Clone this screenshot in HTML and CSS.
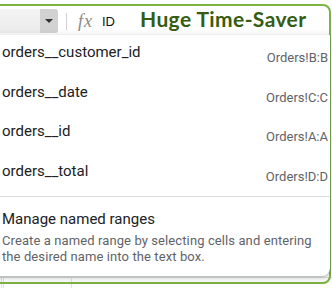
FILE: index.html
```html
<!DOCTYPE html>
<html lang="en">
<head>
  <meta charset="UTF-8">
  <meta name="viewport" content="width=device-width, initial-scale=1.0">
  <title>Named ranges</title>
  <link rel="stylesheet" href="styles.css">
</head>
<body>
  <div class="app">
    <div class="toolbar">
      <div class="name-box">
        <span class="name-value"></span>
        <span class="name-arrow"><span class="caret"></span></span>
      </div>
      <span class="divider"></span>
      <span class="fx">fx</span>
      <span class="formula">ID</span>
      <span class="caption">Huge Time-Saver</span>
    </div>

    <div class="sheet">
      <div class="grid-row">
        <span class="cell cell-narrow"></span>
        <span class="cell cell-wide"></span>
        <span class="cell"></span>
      </div>
    </div>

    <!-- green outline drawn over the shot -->
    <div class="frame"></div>

    <!-- named ranges dropdown -->
    <div class="menu">
      <ul class="range-list">
        <li class="range-item">
          <span class="range-name">orders__customer_id</span>
          <span class="range-ref">Orders!B:B</span>
        </li>
        <li class="range-item">
          <span class="range-name">orders__date</span>
          <span class="range-ref">Orders!C:C</span>
        </li>
        <li class="range-item">
          <span class="range-name">orders__id</span>
          <span class="range-ref">Orders!A:A</span>
        </li>
        <li class="range-item">
          <span class="range-name">orders__total</span>
          <span class="range-ref">Orders!D:D</span>
        </li>
      </ul>
      <div class="manage">
        <div class="manage-title">Manage named ranges</div>
        <p class="manage-text">Create a named range by selecting cells and entering the desired name into the text box.</p>
      </div>
    </div>
  </div>
</body>
</html>
```

FILE: styles.css
```css
html, body {
  margin: 0;
  padding: 0;
  background-color: #fff;
}

.app {
  position: relative;
  width: 332px;
  height: 288px;
  overflow: hidden;
  font-family: Roboto, Arial, sans-serif;
}

/* top bar */
.toolbar {
  display: flex;
  align-items: center;
  height: 36px;
  padding-top: 6px;
  box-sizing: border-box;
}

.name-box {
  display: flex;
  width: 70px;
  height: 24px;
  margin-left: -12px;
  border-radius: 0 3px 3px 0;
  overflow: hidden;
  background: linear-gradient(#f4f4f4, #ebebeb);
}

.name-value {
  flex: 1;
}

.name-arrow {
  width: 18px;
  display: flex;
  align-items: center;
  justify-content: center;
  background-color: #d2d2d2;
}

.caret {
  width: 0;
  height: 0;
  border-left: 4px solid transparent;
  border-right: 4px solid transparent;
  border-top: 4px solid #333;
}

.divider {
  width: 1px;
  height: 17px;
  margin-left: 8px;
  background-color: #d0d0d0;
}

.fx {
  margin-left: 11px;
  font-family: "Liberation Serif", serif;
  font-style: italic;
  font-size: 18px;
  letter-spacing: 1px;
  color: #8a8a8a;
}

.formula {
  margin-left: 9px;
  font-family: "Liberation Sans", Arial, sans-serif;
  font-size: 13px;
  color: #111;
}

.caption {
  margin-left: 25px;
  font-family: Lato, sans-serif;
  font-weight: 700;
  font-size: 21px;
  letter-spacing: 0.4px;
  color: #345c12;
  line-height: 24px;
  margin-top: -4px;
}

/* spreadsheet behind the menu */
.sheet {
  height: 252px;
  display: flex;
  flex-direction: column;
  justify-content: flex-end;
}

.grid-row {
  display: flex;
  height: 10px;
  border-top: 1px solid #e1e1e1;
}

.cell {
  flex: 1;
  border-left: 1px solid #e1e1e1;
}

.cell-narrow {
  flex: none;
  width: 1px;
  margin-left: 1px;
}

.cell-wide {
  flex: none;
  width: 67px;
}

/* dropdown */
.menu {
  position: absolute;
  top: 35px;
  left: -14px;
  width: 344px;
  height: 241px;
  box-sizing: border-box;
  background-color: #fff;
  border-radius: 0 0 8px 8px;
  box-shadow: 0 1px 2px rgba(60, 64, 67, 0.3), 0 2px 6px 2px rgba(60, 64, 67, 0.15);
}

.range-list {
  list-style: none;
  margin: 0;
  padding: 7px 0 15.5px 16px;
  border-bottom: 1px solid #dadce0;
  display: flex;
  flex-direction: column;
  gap: 19.5px;
}

.range-item {
  display: flex;
  justify-content: space-between;
  align-items: flex-start;
  height: 20px;
  padding-right: 2px;
}

.range-name {
  font-size: 15px;
  line-height: 20px;
  color: #202124;
}

.range-ref {
  padding-top: 6px;
  font-size: 13px;
  line-height: 20px;
  color: #5f6368;
}

.manage {
  padding: 12px 6px 0 16px;
}

.manage-title {
  font-size: 15px;
  line-height: 20px;
  color: #202124;
}

.manage-text {
  margin: 3.5px 0 0;
  font-size: 13px;
  line-height: 16px;
  letter-spacing: 0.1px;
  color: #5f6368;
}

.frame {
  position: absolute;
  top: 4px;
  left: -10px;
  right: 1px;
  bottom: 4px;
  border: 2px solid #7cb342;
  border-radius: 8px;
  pointer-events: none;
}
```
